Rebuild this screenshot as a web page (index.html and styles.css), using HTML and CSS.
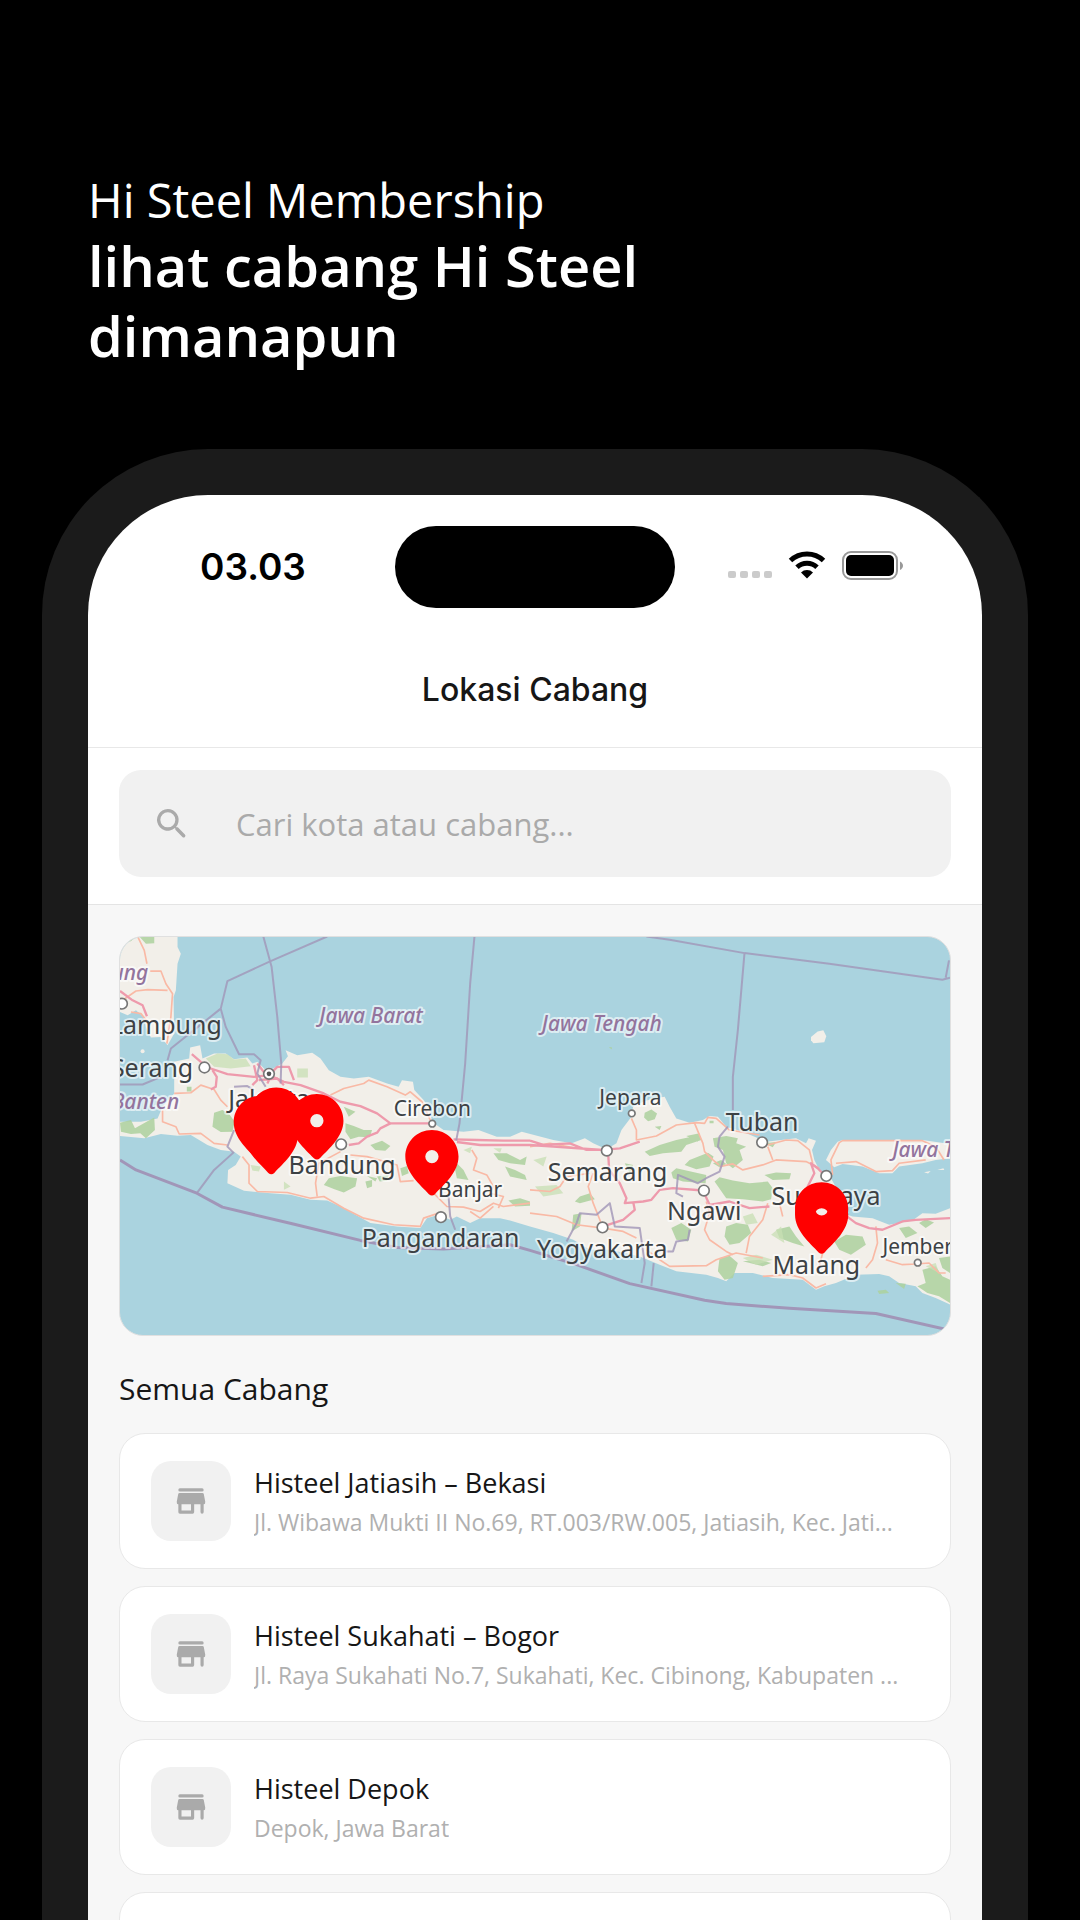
FILE: index.html
```
<!DOCTYPE html>
<html lang="id">
<head>
    <meta charset="UTF-8">
    <meta name="viewport" content="width=device-width, initial-scale=1">
    <title>Lokasi Cabang</title>
    <link rel="stylesheet" href="styles.css">
</head>
<body>
    <header class="hero">
        <p class="hero-brand">Hi Steel Membership</p>
        <h1 class="hero-title">lihat cabang Hi Steel<br>dimanapun</h1>
    </header>

    <main class="phone">
        <div class="status-bar">
            <span class="time">03.03</span>
            <span class="island"></span>
            <div class="status-icons">
                <svg width="44" height="28" viewBox="0 0 44 28" fill="#cbcbcb" aria-hidden="true">
                    <rect x="0" y="20" width="8" height="7" rx="2"/>
                    <rect x="12" y="20" width="8" height="7" rx="2"/>
                    <rect x="24" y="20" width="8" height="7" rx="2"/>
                    <rect x="36" y="20" width="8" height="7" rx="2"/>
                </svg>
                <svg width="38" height="28" viewBox="0 0 38 28" aria-hidden="true">
                    <path d="M2.5 9.5a24 24 0 0 1 33 0" fill="none" stroke="#000" stroke-width="5"/>
                    <path d="M9 16.3a14.5 14.5 0 0 1 20 0" fill="none" stroke="#000" stroke-width="5"/>
                    <path d="M19 27.5l-6-6a8.5 8.5 0 0 1 12 0z"/>
                </svg>
                <svg width="62" height="30" viewBox="0 0 62 30" aria-hidden="true">
                    <rect x="1" y="1" width="54" height="27" rx="8" fill="none" stroke="#999" stroke-width="2"/>
                    <rect x="4" y="4" width="48" height="21" rx="5"/>
                    <path d="M58 10.5c4 2 4 6.500 0 8.500z" fill="#999"/>
                </svg>
            </div>
        </div>

        <h2 class="app-title">Lokasi Cabang</h2>

        <form class="search">
            <label class="search-box">
                <svg class="search-icon" viewBox="0 0 24 24" fill="#aaa" aria-hidden="true">
                    <path d="M15.500 14h-.79l-.28-.27a6.500 6.500 0 1 0-.7.7l.27.28v.79l4.250 4.240a1.050 1.050 0 0 0 1.490-1.490L15.500 14zm-6 0a4.500 4.500 0 1 1 0-9 4.500 4.500 0 0 1 0 9z"/>
                </svg>
                <input type="text" placeholder="Cari kota atau cabang..." aria-label="Cari kota atau cabang">
            </label>
        </form>

        <section class="content">
            <svg class="map" viewBox="27 18 2496 1200" preserveAspectRatio="xMidYMid slice" role="img">
                <defs>
                    <path id="pin" fill="#f00" fill-rule="evenodd" d="M80 0C35 0 0 36 0 80c0 48 44 84 71 113q9 8 18 0c27-29 71-65 71-113C160 36 125 0 80 0zm0 60a20 20 0 1 1 0 40 20 20 0 0 1 0-40z"/>
                </defs>

                <!-- land -->
                <g fill="#f2efe9">
                    <path d="M27 18H200V50L210 70L200 100L195 180L188 200L190 310L170 345L150 320L120 322L105 290L100 262L75 240L50 255L27 245Z"/>
                    <path d="M190 490L190 395L235 385L238 352L268 345L275 385L310 370L345 370L370 387L410 382L425 400L440 395L470 425L515 400L532 378L525 360L560 375L605 368L630 385L655 420L690 440L730 445L775 440L830 460L865 470L875 450L908 455L912 480L940 510L960 540L965 575L1000 600L1060 605L1105 600L1160 620L1200 620L1235 605L1330 630L1385 640L1425 625L1450 640L1490 658L1520 640L1535 600L1565 560L1570 530L1600 515L1630 505L1665 500L1680 530L1700 565L1740 578L1780 570L1800 558L1825 560L1850 590L1900 605L1970 635L2060 625L2090 640L2098 625L2120 632L2108 660L2115 690L2130 720L2165 745L2190 790L2170 840L2230 860L2290 865L2340 885L2410 872L2440 850L2480 852L2523 835V1125L2480 1105L2440 1090L2420 1070L2370 1060L2340 1040L2310 1033L2240 1035L2180 1060L2145 1070L2120 1080L2080 1050L1990 1045L1930 1030L1875 1030L1850 1055L1825 1045L1790 1035L1700 1025L1650 1005L1590 980L1500 960L1440 960L1390 930L1330 910L1260 890L1200 872L1170 865L1110 865L1080 880L1040 860L1020 870L985 855L950 865L930 895L860 890L780 880L690 830L650 812L600 810L540 795L480 790L400 783L350 760L352 720L375 705L390 680L370 665L330 660L290 645L240 615L200 617L150 612L100 625L27 618V575L90 575L140 565L155 530Z"/>
                    <path d="M2150 690L2165 660L2185 635L2200 630L2440 630L2523 642V685L2480 690L2440 700L2370 710L2350 730L2310 730L2260 710L2200 702L2175 712Z"/>
                    <path d="M2105 320L2125 304L2142 300L2151 318L2145 336L2112 339L2105 330Z"/>
                    <circle cx="95" cy="363" r="6"/>
                    <path d="M2445 727l20-4-8 8zM2485 720l18-5 3 5z"/>
                </g>

                <!-- forests -->
                <g class="forest">
                    <path d="M27 18H75L60 32L30 36ZM85 18H130V38L105 40ZM27 578L60 570L72 595L130 562L132 600L105 625L88 610L60 612L30 605Z"/>
                    <path d="M310 548L335 540L355 552L372 575L365 605L330 606L305 590ZM228 470H242V484H228Z"/>
                    <path d="M705 580L730 588L760 600L785 600L778 622L745 620L720 628L705 605ZM700 530L735 545L715 560ZM780 645L815 632L840 648L825 662L795 660ZM770 738L800 745L795 755Z"/>
                    <path d="M655 745L690 738L740 745L735 770L700 788L672 778L640 765ZM765 755L785 750V770L770 775ZM800 740L835 735L830 752L808 755ZM870 715L890 708L895 730L875 738Z"/>
                    <path d="M1040 700L1060 720L1075 750L1040 745L1035 720ZM1150 670L1190 670L1230 690L1250 680L1245 705L1200 700L1165 690ZM1185 710L1215 720L1245 735L1250 750L1200 740ZM1195 812L1230 805L1260 815V828L1215 830Z"/>
                    <path d="M1605 548L1625 538L1642 550L1635 568L1615 574L1603 562ZM1635 590L1655 588L1650 600ZM1800 572H1812V580H1800Z"/>
                    <path d="M1605 665L1650 645L1700 630L1770 615L1775 630L1730 645L1715 665L1660 670L1620 678ZM1730 618L1770 610L1765 635ZM1810 625L1850 618L1885 625L1880 640L1910 650L1890 660L1900 690L1870 715L1850 700L1840 660L1815 650Z"/>
                    <path d="M1725 705L1740 690L1795 668L1812 680L1800 710L1760 718ZM1685 728L1700 715L1790 735L1788 760L1720 755L1690 745Z"/>
                    <path d="M1815 755L1830 742L1870 752L1920 760L1975 755L1990 775L1985 808L1960 815L1900 808L1850 805ZM1965 735L2000 728L2045 730L2040 748L1990 750ZM1965 640L2000 636L1990 652ZM1810 700L1835 690L1850 702L1830 712Z"/>
                    <path d="M1390 855L1415 850L1410 890L1385 905ZM1395 815L1410 800L1440 790L1455 808L1410 820ZM1545 700L1570 705L1560 730ZM1685 895L1715 880L1745 900L1735 935L1700 930Z"/>
                    <path d="M1850 890L1880 880L1915 885L1925 910L1890 940L1860 945L1845 920ZM2000 900L2040 890L2060 920L2085 950L2050 940L2010 925ZM2175 935L2210 915L2260 920L2270 945L2225 975L2190 960Z"/>
                    <path d="M1830 985L1860 978L1885 1000L1870 1045L1845 1050L1825 1025ZM1900 995L1950 990L1985 1000L1960 1010ZM2370 895L2400 890L2425 910L2390 925ZM2430 880L2450 868L2475 878L2450 895ZM2490 985L2523 980V1030L2500 1015ZM2440 1020L2480 1010L2500 1040L2523 1050V1120L2490 1100L2455 1090L2425 1070L2450 1060ZM2305 1083L2330 1080L2340 1090L2310 1093ZM2360 1060L2390 1062L2385 1078ZM1497 352l8-2 2 8z"/>
                </g>
                <g fill="#c8dfb4" opacity=".75">
                    <path d="M285 385L320 370L350 372L370 388L405 385L420 408L360 415L310 410ZM560 415H592V442H560Z"/>
                    <path d="M420 705L450 710L445 725L425 722ZM520 755L540 770L520 780ZM1150 655L1175 655L1170 668ZM1060 660L1085 650L1080 670ZM1270 690L1310 680L1300 710ZM1275 770L1340 765L1360 790L1300 800Z"/>
                    <path d="M1900 860L1930 850L1945 880L1910 885ZM1985 915L2015 890L2025 940ZM2170 900L2200 905L2190 925ZM1900 985L1940 975L1990 990L1940 1005ZM2450 1010L2480 1000L2490 1030Z"/>
                </g>

                <!-- secondary roads -->
                <g class="road">
                    <path d="M80 18L100 60L108 100M118 122H150L165 160L185 190L180 260L168 340M27 215L75 182L110 178L170 180M60 245L90 250L110 275"/>
                    <path d="M190 490L240 488L270 465L310 478L330 510L350 530M155 540V575L195 590L205 612L270 610L310 640L350 645M395 680L415 705V760L440 785L530 788L600 805L640 800L700 835L760 865L850 885L930 890L940 865L985 850"/>
                    <path d="M660 495L700 475L760 460L775 450L830 470L885 495L900 485L935 515L960 570M690 665L625 700L615 760L620 800M720 675L770 680L860 705L870 755L910 752M970 790L1010 830L1060 832L1110 845L1150 820L1180 830L1260 820"/>
                    <path d="M1080 845L1110 865L1150 830M1260 650L1320 640L1400 655M1565 565L1580 600L1580 630L1640 618L1700 585L1760 578L1785 580L1795 562L1820 565L1860 600L1950 615M1755 580L1780 640L1785 665L1810 690L1828 705"/>
                    <path d="M1975 645L2030 630L2065 632L2100 660L2110 700M1830 710L1870 702L1900 720L1960 705L2000 690L2090 695L2130 715M1975 650L1990 690M2170 735L2165 690L2190 638L2200 632L2440 632L2480 650L2505 690M2180 700L2240 695L2300 725L2350 722L2370 700L2450 690"/>
                    <path d="M1085 660L1100 685L1090 720L1130 735L1150 770L1140 790L1180 800L1165 835M1450 730L1435 770L1450 820L1478 890M1260 780L1320 785L1350 770L1370 740L1440 730M1260 850L1340 860L1400 885L1480 895L1540 905L1580 925M1610 960L1650 990L1680 1010L1790 1008L1820 990L1880 970L1960 985"/>
                    <path d="M1790 815L1800 850L1785 900L1800 930L1850 965L1870 975M1975 820L1960 870L1920 920L1910 970M2010 820L2020 860M2300 890L2305 940L2290 990L2270 1015M2330 990L2380 1005L2420 1003L2460 1000L2490 1030L2510 1030M2140 970L2130 1010M1960 1040L2040 1035L2080 1045L2120 1075L2150 1062"/>
                </g>

                <!-- main roads -->
                <g class="highway">
                    <path d="M27 182L65 210L95 225L108 258M243 372L270 395L300 415L350 432L430 440L475 435L520 455L570 465L640 490L690 515L750 528L800 550L840 580L960 580M305 420L318 440L315 470L300 478"/>
                    <path d="M430 405L440 450L425 465M440 400L470 440L500 410L535 410L550 450M445 450L500 445L520 465M470 460L490 420M715 645L745 640L770 620L800 608L810 595L840 580"/>
                    <path d="M1030 628L1100 630L1180 632L1260 632M1040 636L1110 645L1260 645L1330 650L1480 660L1530 655L1590 635M1260 632L1300 645L1380 640L1430 660"/>
                    <path d="M1495 670L1498 720L1530 760L1550 805L1545 820L1600 815L1625 810L1650 780L1690 775L1780 782L1800 825L1860 815L1920 835L1980 830M1570 815L1575 840L1540 870L1480 890"/>
                    <path d="M2150 740L2125 715L2105 700L2115 730L2095 770L2120 820L2200 850L2240 880L2280 895L2320 900L2380 875L2420 870L2523 865"/>
                </g>

                <!-- borders -->
                <g class="border">
                    <path d="M650 18L480 92L350 152L330 235L180 355L170 390M458 18L483 110L500 260L512 400L510 460M330 235L345 290L385 372H430L450 390L440 430L465 470M370 470L410 468L430 480M1093 18L1080 160L1065 400L1048 580L1038 632"/>
                    <path d="M1905 68L1885 300L1870 440V540M1610 18L1680 28L1905 68L2160 100L2500 148L2523 142M2510 142L2520 90"/>
                    <path d="M27 463H95L150 440M370 600L350 650L368 668L310 720L258 790M1015 800L1020 860L1035 900M1855 590L1830 620L1825 650L1845 680L1830 725L1790 745L1765 760L1705 735L1700 790L1720 800"/>
                    <path d="M1370 935L1400 880L1410 850L1460 855L1500 820L1515 890L1590 895L1605 1000L1595 1060M1632 1000L1625 1070M1740 900L1735 930L1700 935L1690 965L1670 965"/>
                </g>
                <path class="border coast" d="M27 690L75 720L258 790L335 832L545 882L750 932L860 953L1000 958L1200 945L1260 962L1400 1005L1560 1062L1785 1112L1850 1122L2040 1136L2300 1152L2523 1202"/>

                <!-- towns -->
                <g class="town">
                    <circle cx="33" cy="220" r="16"/>
                    <circle cx="281" cy="412" r="16"/>
                    <circle cx="475" cy="431" r="16"/>
                    <circle cx="692" cy="643" r="16"/>
                    <circle cx="966" cy="581" r="10"/>
                    <circle cx="992" cy="862" r="16"/>
                    <circle cx="1566" cy="550" r="10"/>
                    <circle cx="1958" cy="637" r="16"/>
                    <circle cx="1491" cy="662" r="16"/>
                    <circle cx="1783" cy="782" r="16"/>
                    <circle cx="1478" cy="893" r="16"/>
                    <circle cx="2151" cy="738" r="16"/>
                    <circle cx="2426" cy="999" r="10"/>
                </g>
                <circle cx="475" cy="431" r="7" fill="#555"/>

                <!-- labels -->
                <g class="region">
                    <text x="112" y="150" text-anchor="end">Lampung</text>
                    <text x="205" y="537" text-anchor="end">Banten</text>
                    <text x="782" y="278" text-anchor="middle">Jawa Barat</text>
                    <text x="1476" y="302" text-anchor="middle">Jawa Tengah</text>
                    <text x="2350" y="682">Jawa Timur</text>
                </g>
                <g class="city">
                    <text x="333" y="310" text-anchor="end">Lampung</text>
                    <text x="247" y="440" text-anchor="end">Serang</text>
                    <text x="475" y="534" text-anchor="middle">Jakarta</text>
                    <text x="695" y="733" text-anchor="middle">Bandung</text>
                    <text x="991" y="951" text-anchor="middle">Pangandaran</text>
                    <text x="1493" y="752" text-anchor="middle">Semarang</text>
                    <text x="1477" y="984" text-anchor="middle">Yogyakarta</text>
                    <text x="1784" y="870" text-anchor="middle">Ngawi</text>
                    <text x="1958" y="604" text-anchor="middle">Tuban</text>
                    <text x="2150" y="826" text-anchor="middle">Surabaya</text>
                    <text x="2121" y="1034" text-anchor="middle">Malang</text>
                </g>
                <g class="city small">
                    <text x="966" y="557" text-anchor="middle">Cirebon</text>
                    <text x="1080" y="800" text-anchor="middle">Banjar</text>
                    <text x="1562" y="524" text-anchor="middle">Jepara</text>
                    <text x="2320" y="974">Jember</text>
                </g>

                <!-- branch pins -->
                <use href="#pin" x="539" y="492"/>
                <use href="#pin" x="369" y="497"/>
                <use href="#pin" x="417" y="472"/>
                <use href="#pin" x="402" y="536"/>
                <use href="#pin" x="885" y="600"/>
                <use href="#pin" x="2057" y="757"/>
                <use href="#pin" x="2057" y="775"/>
            </svg>

            <h3 class="list-title">Semua Cabang</h3>
            <ul class="branches">
                <li class="branch">
                    <span class="branch-icon">
                        <svg viewBox="0 0 24 24" fill="#aaa" fill-rule="evenodd" aria-hidden="true">
                            <path d="M5 4h14a1 1 0 0 1 0 2H5a1 1 0 0 1 0-2zM4.800 7h14.400q.8 0 .9.800l.9 4.600q.1 1.600-.8 1.600H20v5a1 1 0 0 1-2 0v-5h-4v5a1 1 0 0 1-1 1H5a1 1 0 0 1-1-1v-5h-.2q-.9 0-.8-1.600l.9-4.600Q4 7 4.800 7zM6 14v4h6v-4z"/>
                        </svg>
                    </span>
                    <div class="branch-info">
                        <h4>Histeel Jatiasih – Bekasi</h4>
                        <p>Jl. Wibawa Mukti II No.69, RT.003/RW.005, Jatiasih, Kec. Jati...</p>
                    </div>
                </li>
                <li class="branch">
                    <span class="branch-icon">
                        <svg viewBox="0 0 24 24" fill="#aaa" fill-rule="evenodd" aria-hidden="true">
                            <path d="M5 4h14a1 1 0 0 1 0 2H5a1 1 0 0 1 0-2zM4.800 7h14.400q.8 0 .9.800l.9 4.600q.1 1.600-.8 1.600H20v5a1 1 0 0 1-2 0v-5h-4v5a1 1 0 0 1-1 1H5a1 1 0 0 1-1-1v-5h-.2q-.9 0-.8-1.600l.9-4.600Q4 7 4.800 7zM6 14v4h6v-4z"/>
                        </svg>
                    </span>
                    <div class="branch-info">
                        <h4>Histeel Sukahati – Bogor</h4>
                        <p>Jl. Raya Sukahati No.7, Sukahati, Kec. Cibinong, Kabupaten ...</p>
                    </div>
                </li>
                <li class="branch">
                    <span class="branch-icon">
                        <svg viewBox="0 0 24 24" fill="#aaa" fill-rule="evenodd" aria-hidden="true">
                            <path d="M5 4h14a1 1 0 0 1 0 2H5a1 1 0 0 1 0-2zM4.800 7h14.400q.8 0 .9.800l.9 4.600q.1 1.600-.8 1.600H20v5a1 1 0 0 1-2 0v-5h-4v5a1 1 0 0 1-1 1H5a1 1 0 0 1-1-1v-5h-.2q-.9 0-.8-1.600l.9-4.600Q4 7 4.800 7zM6 14v4h6v-4z"/>
                        </svg>
                    </span>
                    <div class="branch-info">
                        <h4>Histeel Depok</h4>
                        <p>Depok, Jawa Barat</p>
                    </div>
                </li>
                <li class="branch"></li>
            </ul>
        </section>
    </main>
</body>
</html>
```
FILE: styles.css
```
* { box-sizing: border-box; margin: 0; padding: 0; }
body { display: flex; flex-direction: column; height: 100vh; overflow: hidden; background: #000; color: #161616; font-family: "Open Sans", sans-serif; }
svg { display: block; flex-shrink: 0; }

/* headline */
.hero { padding: 170px 88px 79px; color: #fff; }
.hero-brand { font-size: 47px; line-height: 60px; font-weight: 400; }
.hero-title { font-size: 56px; line-height: 70px; font-weight: 600; }

/* phone */
.phone { flex: 1; min-height: 0; margin: 0 52px 0 42px; border: 46px solid #1b1b1b; border-bottom: 0; border-radius: 166px 166px 0 0; background: #fff; overflow: hidden; }
.status-bar { display: grid; grid-template-columns: 1fr 280px 1fr; align-items: center; padding-top: 31px; }
.time { padding: 0 0 2px 112px; font-family: Inter, sans-serif; font-size: 37px; font-weight: 600; color: #000; }
.island { height: 82px; border-radius: 41px; background: #000; }
.status-icons { display: flex; justify-content: flex-end; gap: 16px; padding: 0 78px 2px 0; }
.app-title { padding: 62px 0 37px; border-bottom: 1px solid #e8e8e8; font-family: Inter, sans-serif; font-size: 32px; line-height: 40px; font-weight: 500; text-align: center; }

.search { padding: 22px 31px 27px; border-bottom: 1px solid #e4e4e4; }
.search-box { display: flex; align-items: center; gap: 44px; height: 107px; padding: 0 33px; border-radius: 22px; background: #f1f1f1; }
.search-icon { width: 40px; height: 40px; }
.search-box input { flex: 1; min-width: 0; border: 0; outline: 0; background: none; font: 400 31px "Open Sans", sans-serif; color: #161616; }
.search-box input::placeholder { color: #aaa; opacity: 1; }

.content { padding: 31px 31px 0; background: #f7f7f7; }

/* map */
.map { width: 100%; aspect-ratio: 832 / 400; border: 1px solid #e0e0e0; border-radius: 24px; background: #aad3df; }
.forest { fill: #add19e; opacity: .85; }
.road { fill: none; stroke: #f9b9a5; stroke-width: 5; stroke-linejoin: round; }
.highway { fill: none; stroke: #ee9aac; stroke-width: 7; stroke-linejoin: round; }
.border { fill: none; stroke: #a196b8; stroke-width: 6; stroke-linejoin: round; opacity: .8; }
.coast { stroke-width: 9; opacity: 1; }
.town { fill: #fff; stroke: #777; stroke-width: 5; }
.region, .city { font-family: "Noto Sans", sans-serif; paint-order: stroke; stroke: #fff; stroke-opacity: .6; stroke-width: 12; stroke-linejoin: round; }
.region { font-size: 63px; font-style: italic; font-weight: 500; fill: #93749d; }
.city { font-size: 75px; fill: #3c4144; }
.small { font-size: 63px; }

/* branch list */
.list-title { margin: 33px 0 24px; font-size: 30px; line-height: 40px; font-weight: 400; }
.branches { display: flex; flex-direction: column; gap: 17px; list-style: none; }
.branch { display: flex; align-items: center; gap: 23px; height: 136px; padding: 0 31px; border: 1px solid #e8e8e8; border-radius: 26px; background: #fff; }
.branch-icon { display: grid; place-items: center; width: 80px; height: 80px; flex-shrink: 0; border-radius: 20px; background: #f1f1f1; }
.branch-icon svg { width: 38px; height: 38px; }
.branch-info { display: grid; gap: 3px; min-width: 0; padding-top: 3px; }
.branch-info h4, .branch-info p { overflow: hidden; white-space: nowrap; text-overflow: ellipsis; line-height: 36px; }
.branch-info h4 { font-size: 27px; font-weight: 400; }
.branch-info p { font-size: 23px; font-weight: 400; color: #b0b0b0; }
```
